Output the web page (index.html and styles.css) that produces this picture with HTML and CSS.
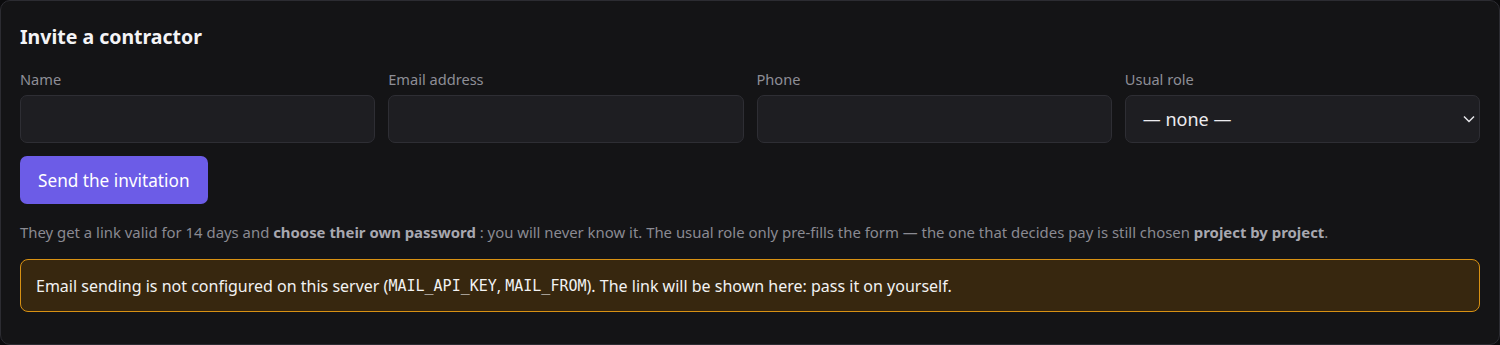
FILE: index.html
```html
<!DOCTYPE html>
<html lang="en">
<head>
<meta charset="utf-8">
<title>Invite a contractor</title>
<link rel="stylesheet" href="styles.css">
</head>
<body>
<section class="card">
  <h2 class="title">Invite a contractor</h2>
  <div class="fields">
    <label class="field">
      <span class="label">Name</span>
      <input class="input" type="text">
    </label>
    <label class="field">
      <span class="label">Email address</span>
      <input class="input" type="email">
    </label>
    <label class="field">
      <span class="label">Phone</span>
      <input class="input" type="tel">
    </label>
    <label class="field">
      <span class="label">Usual role</span>
      <span class="select">
        <span class="select-value">— none —</span>
        <svg class="chevron" width="12" height="8" viewBox="0 0 12 8"><path d="M1 1.5 L6 6.5 L11 1.5" fill="none" stroke="#e6e6ea" stroke-width="1.5"/></svg>
      </span>
    </label>
  </div>
  <button class="btn" type="button">Send the invitation</button>
  <p class="help">They get a link valid for 14 days and <strong>choose their own password</strong> : you will never know it. The usual role only pre-fills the form — the one that decides pay is still chosen <strong>project by project</strong>.</p>
  <div class="alert">Email sending is not configured on this server (<code>MAIL_API_KEY</code>, <code>MAIL_FROM</code>). The link will be shown here: pass it on yourself.</div>
</section>
</body>
</html>
```
FILE: styles.css
```css
html, body {
  margin: 0;
  padding: 0;
  background: #0b0b0d;
}
body {
  font-family: "Noto Sans", "Open Sans", sans-serif;
  color: #ececf0;
}
.card {
  box-sizing: border-box;
  width: 1500px;
  height: 345px;
  background: #141416;
  border: 1px solid #2c2c32;
  border-radius: 10px;
  padding: 19px 19px;
}
.title {
  margin: 0 0 15px;
  font-size: 19.5px;
  font-weight: 700;
  line-height: 34px;
  color: #f4f4f6;
}
.fields {
  display: grid;
  grid-template-columns: repeat(4, 1fr);
  gap: 13px;
}
.field {
  display: flex;
  flex-direction: column;
  gap: 6px;
}
.label {
  font-size: 14.6px;
  line-height: 20px;
  color: #8e8e96;
}
.input, .select {
  box-sizing: border-box;
  height: 48px;
  background: #1e1e22;
  border: 1px solid #2e2e34;
  border-radius: 7px;
  font: inherit;
  color: #ececf0;
  outline: none;
}
.select {
  display: flex;
  align-items: center;
  justify-content: space-between;
  padding: 0 4px 0 17px;
  font-size: 18px;
}
.btn {
  margin-top: 13px;
  height: 48px;
  padding: 0 18px;
  background: #6c5ce7;
  border: none;
  border-radius: 7px;
  color: #ffffff;
  font-family: inherit;
  font-size: 17.2px;
}
.help {
  margin: 14px 0 0;
  font-size: 14.9px;
  line-height: 28px;
  color: #8a8a92;
}
.help strong {
  color: #a8a8b0;
}
.alert {
  margin-top: 13px;
  box-sizing: border-box;
  height: 53px;
  display: flex;
  align-items: center;
  padding: 0 15px;
  background: #37270f;
  border: 1px solid #d89113;
  border-radius: 8px;
  font-size: 16px;
  color: #f2f2f2;
  white-space: pre;
}
.alert code {
  font-family: "DejaVu Sans Mono", monospace;
  font-size: 15px;
}
```
